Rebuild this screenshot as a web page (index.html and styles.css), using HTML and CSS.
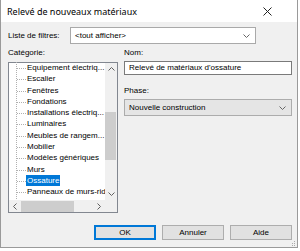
FILE: index.html
```html
<!DOCTYPE html>
<html lang="fr">
<head>
  <meta charset="UTF-8">
  <title>Relevé de nouveaux matériaux</title>
  <link rel="stylesheet" href="styles.css">
</head>
<body>
  <div class="dialog">
    <div class="titlebar">
      <span class="title">Relevé de nouveaux matériaux</span>
      <svg class="close" width="9" height="9" viewBox="0 0 9 9">
        <path d="M0.5 0.5 L8.5 8.5 M8.5 0.5 L0.5 8.5" stroke="#222" stroke-width="1"/>
      </svg>
    </div>

    <div class="body">
      <!-- filtre -->
      <div class="filter-row">
        <span class="label">Liste de filtres:</span>
        <div class="combo filter-combo">
          <span>&lt;tout afficher&gt;</span>
          <svg class="chev" width="7" height="4" viewBox="0 0 7 4"><path d="M0.5 0.5 L3.5 3.5 L6.5 0.5" fill="none" stroke="#666"/></svg>
        </div>
      </div>

      <div class="main">
        <div class="left">
          <div class="label">Catégorie:</div>
          <div class="tree">
            <div class="tree-view">
              <ul class="items">
                <li>Equipement électriq...</li>
                <li>Escalier</li>
                <li>Fenêtres</li>
                <li>Fondations</li>
                <li>Installations électriq...</li>
                <li>Luminaires</li>
                <li>Meubles de rangem...</li>
                <li>Mobilier</li>
                <li>Modèles génériques</li>
                <li>Murs</li>
                <li class="selected"><span>Ossature</span></li>
                <li>Panneaux de murs-rideaux</li>
                <li>Plafonds</li>
              </ul>
              <div class="vscroll">
                <svg class="arrow" width="7" height="4" viewBox="0 0 7 4"><path d="M0.5 3.5 L3.5 0.5 L6.5 3.5" fill="none" stroke="#606060"/></svg>
                <div class="vtrack"><div class="vthumb"></div></div>
                <svg class="arrow" width="7" height="4" viewBox="0 0 7 4"><path d="M0.5 0.5 L3.5 3.5 L6.5 0.5" fill="none" stroke="#606060"/></svg>
              </div>
            </div>
            <div class="hbar">
              <div class="hscroll">
                <svg class="arrow" width="4" height="7" viewBox="0 0 4 7"><path d="M3.5 0.5 L0.5 3.5 L3.5 6.5" fill="none" stroke="#606060"/></svg>
                <div class="htrack"><div class="hthumb"></div></div>
                <svg class="arrow" width="4" height="7" viewBox="0 0 4 7"><path d="M0.5 0.5 L3.5 3.5 L0.5 6.5" fill="none" stroke="#606060"/></svg>
              </div>
              <div class="corner"></div>
            </div>
          </div>
        </div>

        <div class="right">
          <div class="label">Nom:</div>
          <div class="textbox">Relevé de matériaux d'ossature</div>
          <div class="label phase-label">Phase:</div>
          <div class="combo phase-combo">
            <span>Nouvelle construction</span>
            <svg class="chev" width="7" height="4" viewBox="0 0 7 4"><path d="M0.5 0.5 L3.5 3.5 L6.5 0.5" fill="none" stroke="#666"/></svg>
          </div>
        </div>
      </div>

      <div class="buttons">
        <button class="btn default">OK</button>
        <button class="btn">Annuler</button>
        <button class="btn">Aide</button>
      </div>
    </div>
    <svg class="grip" width="5" height="5" viewBox="0 0 5 5">
      <rect x="3" y="0" width="1" height="1" fill="#aaa"/>
      <rect x="1" y="2" width="1" height="1" fill="#aaa"/>
      <rect x="3" y="2" width="1" height="1" fill="#aaa"/>
      <rect x="-1" y="4" width="1" height="1" fill="#aaa"/>
      <rect x="1" y="4" width="1" height="1" fill="#aaa"/>
      <rect x="3" y="4" width="1" height="1" fill="#aaa"/>
    </svg>
  </div>
</body>
</html>
```

FILE: styles.css
```css
body {
  margin: 0;
  background: #fff;
  font-family: "Liberation Sans", Arial, sans-serif;
  font-size: 8px;
  color: #000;
}

.dialog {
  position: relative;
  width: 296px;
  height: 247px;
  background: #f0f0f0;
  border: 1px solid #9a9a9a;
  border-top: none;
}

.titlebar {
  height: 22px;
  background: #fff;
  display: flex;
  align-items: center;
  justify-content: space-between;
  padding: 0 25px 0 6px;
}

.title {
  font-size: 9px;
  font-family: "Noto Sans", sans-serif;
}

.body {
  padding: 5px 5px 0 7px;
}

.label {
  line-height: 12px;
  white-space: nowrap;
}

.filter-row {
  display: flex;
  align-items: center;
  height: 17px;
}

.filter-row .label {
  width: 62px;
}

.combo {
  height: 17px;
  box-sizing: border-box;
  border: 1px solid #a9a9a9;
  background: #fff;
  display: flex;
  align-items: center;
  justify-content: space-between;
  padding: 0 5px 0 4px;
}

.filter-combo {
  width: 186px;
}

.main {
  display: flex;
  gap: 6px;
  margin-top: 3px;
}

.left {
  width: 110px;
}

.tree {
  margin-top: 3px;
  height: 151px;
  box-sizing: border-box;
  border: 1px solid #828790;
  background: #fff;
  display: flex;
  flex-direction: column;
}

.tree-view {
  flex: 1;
  display: flex;
  min-height: 0;
}

.items {
  list-style: none;
  margin: -1px 0 0 7px;
  padding: 0 0 0 11px;
  flex: 1;
  overflow: hidden;
  background-image: linear-gradient(#b0b0b0 50%, transparent 50%);
  background-size: 1px 2px;
  background-repeat: repeat-y;
  background-position: 0 0;
}

.items li {
  line-height: 11.3px;
  height: 11.3px;
  white-space: nowrap;
  position: relative;
}

.items li::before {
  content: "";
  position: absolute;
  left: -10px;
  top: 6px;
  width: 9px;
  height: 1px;
  background-image: linear-gradient(90deg, #b0b0b0 50%, transparent 50%);
  background-size: 2px 1px;
}

.items li.selected span {
  background: #0078d7;
  color: #fff;
  margin-left: -1px;
  padding: 1px 1px;
}

.vscroll {
  width: 12px;
  background: #f0f0f0;
  display: flex;
  flex-direction: column;
  align-items: center;
}

.vscroll .arrow {
  margin: 4px 0;
}

.vtrack {
  flex: 1;
  width: 100%;
  padding-top: 37px;
}

.vthumb {
  height: 48px;
  width: 11px;
  background: #cdcdcd;
}

.hbar {
  height: 12px;
  display: flex;
}

.hscroll {
  flex: 1;
  background: #f0f0f0;
  display: flex;
  align-items: center;
}

.hscroll .arrow {
  margin: 0 4px;
}

.htrack {
  flex: 1;
  height: 11px;
}

.hthumb {
  width: 53px;
  height: 11px;
  background: #cdcdcd;
}

.corner {
  width: 12px;
  background: #f0f0f0;
}

.right {
  flex: 1;
}

.textbox {
  margin-top: 2px;
  height: 14px;
  box-sizing: border-box;
  border: 1px solid #7a7a7a;
  background: #fff;
  line-height: 12px;
  padding-left: 4px;
  white-space: nowrap;
}

.phase-label {
  margin-top: 10px;
}

.phase-combo {
  margin-top: 2px;
  background: #e5e5e5;
  border-color: #acacac;
}

.buttons {
  display: flex;
  justify-content: flex-end;
  gap: 6px;
  margin-top: 12px;
}

.btn {
  width: 62px;
  height: 15px;
  padding: 0;
  font-family: inherit;
  font-size: 8px;
  line-height: 13px;
  background: #e1e1e1;
  border: 1px solid #adadad;
  color: #000;
}

.btn.default {
  border: 1px solid #0078d7;
  box-shadow: inset 0 0 0 1px #0078d7;
}

.grip {
  position: absolute;
  right: 1px;
  bottom: 1px;
}
```
